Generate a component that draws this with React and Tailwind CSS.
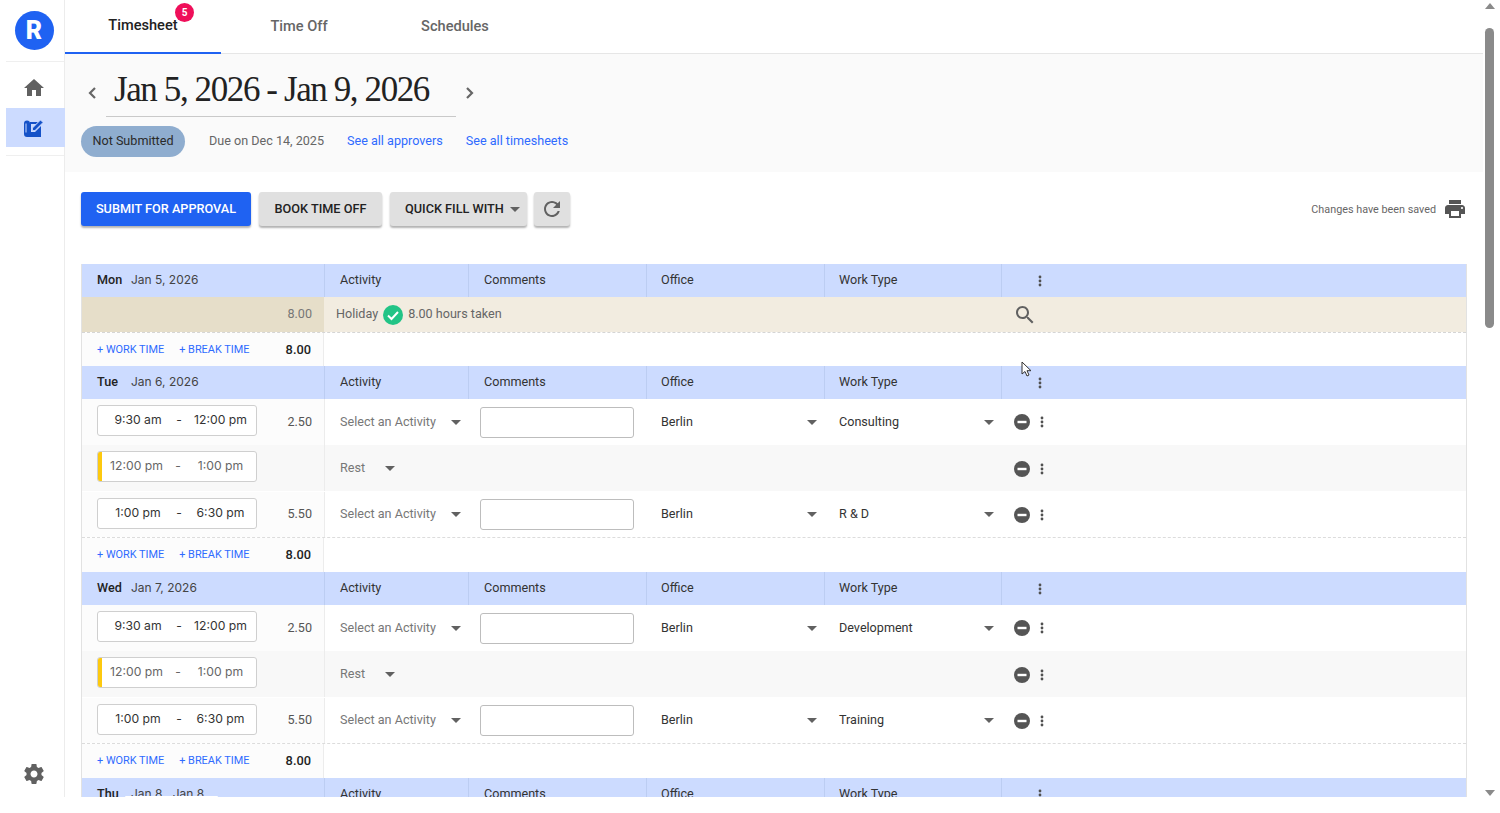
import React from 'react';

const BLUE = 'text-[#2f6bff]';
const COLS = 'grid grid-cols-[242px_144px_178px_178px_177px_1fr]';
const RAISED = 'shadow-[0_2px_2px_rgba(0,0,0,0.3)]';

function Caret({ className = '' }) {
  return (
    <svg width="10" height="5" viewBox="0 0 10 5" className={className}>
      <path d="M0 0h10L5 5z" fill="#616161" />
    </svg>
  );
}

function Dots({ className = '' }) {
  return (
    <svg width="4" height="12" viewBox="0 0 4 12" className={className}>
      <circle cx="2" cy="2" r="1.4" fill="#505050" />
      <circle cx="2" cy="6" r="1.4" fill="#505050" />
      <circle cx="2" cy="10" r="1.4" fill="#505050" />
    </svg>
  );
}

function MinusCircle() {
  return (
    <svg width="16" height="16" viewBox="0 0 16 16">
      <circle cx="8" cy="8" r="8" fill="#555" />
      <rect x="3.5" y="6.8" width="9" height="2.4" fill="#fff" />
    </svg>
  );
}

function Chevron({ left }) {
  return (
    <svg width="10" height="14" viewBox="0 0 10 14">
      <path d={left ? 'M8 2 3 7l5 5' : 'M2 2l5 5-5 5'} fill="none" stroke="#666" strokeWidth="2.2" />
    </svg>
  );
}

function HeaderRow({ day, date }) {
  const cell = 'flex items-center pb-px border-l border-[#bccdf2] text-[#333]';
  return (
    <div className={`${COLS} h-[33px] bg-[#ccdbff] text-[12.6px] overflow-hidden`}>
      <div className="flex items-center pb-px pl-[15px]">
        <span className="font-medium text-[#222] w-[34px]">{day}</span>
        <span className="text-[#444] font-['Inter',sans-serif] text-[12px]">{date}</span>
      </div>
      <div className={`${cell} pl-[15px]`}>Activity</div>
      <div className={`${cell} pl-[15px]`}>Comments</div>
      <div className={`${cell} pl-[14px]`}>Office</div>
      <div className={`${cell} pl-[14px]`}>Work Type</div>
      <div className="flex items-center border-l border-[#bccdf2] pl-[36px]">
        <Dots />
      </div>
    </div>
  );
}

function Times({ from, to, rest }) {
  return (
    <div className={`flex items-center h-[31px] w-[160px] bg-white border border-[#cfcfcf] rounded-[3px] overflow-hidden font-['Inter',sans-serif] text-[12.2px] whitespace-nowrap ${rest ? 'text-[#666]' : 'text-[#333]'}`}>
      {rest ? <div className="w-[4px] h-full shrink-0 bg-[#fdc90f]" /> : <div className="w-[6px] shrink-0" />}
      <span className={`${rest ? 'w-[69px]' : 'w-[68px]'} shrink-0 text-center`}>{from}</span>
      <span className="w-[14px] shrink-0 text-center">-</span>
      <span className={`${rest ? 'w-[71px]' : 'w-[69px]'} shrink-0 text-center`}>{to}</span>
    </div>
  );
}

function WorkRow({ from, to, hours, office, type, last }) {
  return (
    <div className={`${COLS} text-[12.6px] bg-white ${last ? 'h-[47px] pt-px border-b border-dashed border-[#dcdcdc]' : 'h-[46px]'}`}>
      <div className="flex items-center pl-[15px] pr-[12px] bg-[#fcfcfc]">
        <div className="-mt-[3px]"><Times from={from} to={to} /></div>
        <span className="ml-auto text-[#555]">{hours}</span>
      </div>
      <div className="flex items-center pl-[15px] border-l border-[#ececec] text-[#777]">
        <span className="w-[111px] shrink-0">Select an Activity</span>
        <Caret />
      </div>
      <div className="flex items-center pl-[12px]">
        <div className="w-[154px] h-[31px] bg-white border border-[#bdbdbd] rounded-[3px]" />
      </div>
      <div className="flex items-center pl-[15px] text-[#333]">
        <span className="w-[146px] shrink-0">{office}</span>
        <Caret />
      </div>
      <div className="flex items-center pl-[15px] text-[#333]">
        <span className="w-[145px] shrink-0">{type}</span>
        <Caret />
      </div>
      <div className="flex items-center pl-[13px] gap-[10px]">
        <MinusCircle />
        <Dots />
      </div>
    </div>
  );
}

function RestRow() {
  return (
    <div className={`${COLS} h-[46px] bg-[#f8f8f8] text-[12.6px]`}>
      <div className="flex items-center pl-[15px]">
        <div className="-mt-[3px]"><Times from="12:00 pm" to="1:00 pm" rest /></div>
      </div>
      <div className="flex items-center pl-[15px] pt-px border-l border-[#ececec] text-[#777]">
        <span className="w-[45px]">Rest</span>
        <Caret />
      </div>
      <div />
      <div />
      <div />
      <div className="flex items-center pl-[13px] pt-px gap-[10px]">
        <MinusCircle />
        <Dots />
      </div>
    </div>
  );
}

function FooterRow({ h = 'h-[34px]' }) {
  return (
    <div className={`grid grid-cols-[242px_1fr] ${h} bg-white`}>
      <div className="flex items-center pl-[15px] pr-[12px] bg-[#fcfcfc] border-r border-[#ececec]">
        <span className={`text-[10.9px] pt-px ${BLUE}`}>+ WORK TIME</span>
        <span className={`text-[10.9px] pt-px ml-[15px] ${BLUE}`}>+ BREAK TIME</span>
        <span className="ml-auto text-[12.8px] font-medium text-[#222]">8.00</span>
      </div>
      <div />
    </div>
  );
}

function Day({ day, date, rows }) {
  return (
    <div>
      <HeaderRow day={day} date={date} />
      <WorkRow from="9:30 am" to="12:00 pm" hours="2.50" office="Berlin" type={rows[0]} />
      <RestRow />
      <WorkRow from="1:00 pm" to="6:30 pm" hours="5.50" office="Berlin" type={rows[1]} last />
      <FooterRow />
    </div>
  );
}

export default function App() {
  return (
    <div className="relative h-[813px] w-full bg-white overflow-hidden font-['Roboto',sans-serif]">
      <div className="flex h-[797px] overflow-hidden">
        {/* sidebar */}
        <aside className="w-[65px] shrink-0 border-r border-[#ececec] flex flex-col">
          <div className="h-[61px] flex items-center justify-center pl-[4px]">
            <div className="w-[39px] h-[39px] rounded-full bg-[#1f62f2] flex items-center justify-center text-white text-[25px] font-black">R</div>
          </div>
          <div className="ml-[6px] border-t border-[#efefef] h-[47px] flex items-center justify-center pt-[6px] pr-[2px]">
            <svg width="24" height="24" viewBox="0 0 24 24"><path d="M10 20v-6h4v6h5v-8h3L12 3 2 12h3v8z" fill="#616161" /></svg>
          </div>
          <div className="ml-[6px] -mr-px h-[39px] bg-[#ccdbff] flex items-center justify-center pr-[3px]">
            <svg width="22" height="20" viewBox="0 0 22 20">
              <path d="M1 5.500a3 3 0 0 1 6 0V4h8l-2 2H8v8h4l6-6v11H4a3 3 0 0 1-3-3z" fill="#1552c8" />
              <path d="M3 5.500v9" stroke="#ccdbff" strokeWidth="1" />
              <path d="M9.500 12.500V10l8-8L20 4.500l-8 8z" fill="#1552c8" stroke="#ccdbff" strokeWidth="0.8" />
            </svg>
          </div>
          <div className="ml-[6px] border-t border-[#efefef] mt-[8px]" />
          <div className="mt-auto h-[35px] flex justify-center pl-[4px]">
            <svg width="24" height="24" viewBox="0 0 24 24"><path d="M19.430 12.980c.04-.32.07-.64.07-.98s-.03-.66-.07-.98l2.110-1.650c.19-.15.24-.42.12-.64l-2-3.460c-.12-.22-.39-.3-.61-.22l-2.490 1c-.52-.4-1.080-.73-1.690-.98l-.38-2.650C14.460 2.180 14.250 2 14 2h-4c-.25 0-.46.18-.49.42l-.38 2.650c-.61.25-1.170.59-1.690.98l-2.490-1c-.23-.09-.49 0-.61.22l-2 3.460c-.13.22-.07.49.12.64l2.110 1.650c-.04.32-.07.65-.07.98s.03.66.07.98l-2.110 1.650c-.19.15-.24.42-.12.64l2 3.460c.12.22.39.3.61.22l2.490-1c.52.4 1.080.73 1.690.98l.38 2.650c.03.24.24.42.49.42h4c.25 0 .46-.18.49-.42l.38-2.650c.61-.25 1.170-.59 1.690-.98l2.490 1c.23.09.49 0 .61-.22l2-3.460c.12-.22.07-.49-.12-.64zM12 15.500c-1.930 0-3.500-1.570-3.500-3.500s1.570-3.500 3.500-3.500 3.500 1.570 3.500 3.500-1.570 3.500-3.500 3.500z" fill="#616161" /></svg>
          </div>
        </aside>

        {/* main */}
        <main className="w-[1418px] shrink-0">
          <div className="flex h-[54px] border-b border-[#e6e6e6]">
            <div className="relative w-[156px] h-[54px] border-b-2 border-[#1f62f2] flex items-center justify-center text-[14.6px] font-medium text-[#222]">
              Timesheet
              <span className="absolute left-[110px] top-[3px] w-[19px] h-[19px] rounded-full bg-[#ef0f5a] text-white text-[10px] font-bold flex items-center justify-center">5</span>
            </div>
            <div className="w-[156px] flex items-center justify-center text-[14.6px] font-medium text-[#666]">Time Off</div>
            <div className="w-[156px] flex items-center justify-center text-[14.6px] font-medium text-[#666]">Schedules</div>
          </div>

          <div className="h-[118px] bg-[#fafafa] pl-[16px]">
            <div className="flex items-start h-[72px]">
              <div className="pl-[6px] pt-[32px] w-[25px]"><Chevron left /></div>
              <div className="w-[350px] h-[63px] border-b border-[#c9c9c9] pl-[8px] pt-[14px] font-['Liberation_Serif',serif] text-[35px] leading-[44px] text-[#222] tracking-[-1.4px] whitespace-nowrap">
                Jan 5, 2026 - Jan 9, 2026
              </div>
              <div className="pl-[9px] pt-[32px]"><Chevron /></div>
            </div>
            <div className="flex items-center text-[12.6px]">
              <span className="w-[104px] h-[31px] rounded-full bg-[#8fadcf] text-[#2a2a2a] flex items-center justify-center">Not Submitted</span>
              <span className="ml-[24px] text-[#666]">Due on Dec 14, 2025</span>
              <span className={`ml-[23px] ${BLUE}`}>See all approvers</span>
              <span className={`ml-[23px] ${BLUE}`}>See all timesheets</span>
            </div>
          </div>

          <div className="h-[92px] pl-[16px] pr-[16px] flex items-start pt-[20px]">
            <button className={`w-[170px] h-[34px] bg-[#1f62f2] text-white text-[12.7px] font-medium rounded-[3px] ${RAISED}`}>SUBMIT FOR APPROVAL</button>
            <button className={`ml-[8px] w-[123px] h-[34px] bg-[#e0e0e0] text-[#222] text-[12.7px] font-medium rounded-[3px] ${RAISED}`}>BOOK TIME OFF</button>
            <button className={`ml-[8px] w-[137px] h-[34px] bg-[#e0e0e0] text-[#222] text-[12.7px] font-medium rounded-[3px] ${RAISED} flex items-center pl-[15px] whitespace-nowrap`}>
              QUICK FILL WITH
              <Caret className="ml-[6px]" />
            </button>
            <button className={`ml-[7px] w-[36px] h-[34px] bg-[#e0e0e0] rounded-[3px] ${RAISED} flex items-center justify-center`}>
              <svg width="24" height="24" viewBox="0 0 24 24"><path d="M17.650 6.350C16.200 4.900 14.210 4 12 4c-4.420 0-7.990 3.580-7.990 8s3.570 8 7.990 8c3.730 0 6.840-2.550 7.730-6h-2.080c-.82 2.330-3.040 4-5.650 4-3.310 0-6-2.690-6-6s2.690-6 6-6c1.660 0 3.140.69 4.220 1.780L13 11h7V4z" fill="#616161" /></svg>
            </button>
            <span className="ml-auto mt-[10px] text-[10.8px] text-[#666]">Changes have been saved</span>
            <svg className="ml-[7px] mt-[5px]" width="24" height="24" viewBox="0 0 24 24"><path d="M19 8H5c-1.660 0-3 1.340-3 3v6h4v4h12v-4h4v-6c0-1.660-1.340-3-3-3zm-3 11H8v-5h8zm3-7c-.55 0-1-.45-1-1s.45-1 1-1 1 .45 1 1-.45 1-1 1zm-1-9H6v4h12z" fill="#555" /></svg>
          </div>

          <div className="ml-[16px] w-[1386px] border-x border-[#e2e2e2]">
            <HeaderRow day="Mon" date="Jan 5, 2026" />
            <div className="grid grid-cols-[242px_1fr] h-[36px] border-b border-dashed border-[#d5d5d5] text-[12.6px]">
              <div className="bg-[#e6dec9] flex items-center justify-end pr-[12px] text-[#777]">8.00</div>
              <div className="bg-[#f2ece0] flex items-center pl-[12px] text-[#666] relative">
                <span>Holiday</span>
                <svg className="ml-[5px]" width="20" height="20" viewBox="0 0 20 20">
                  <circle cx="10" cy="10" r="10" fill="#22c486" />
                  <path d="M5 10.500 8.500 14 15 7" fill="none" stroke="#fff" strokeWidth="2" />
                </svg>
                <span className="ml-[5px]">8.00 hours taken</span>
                <svg className="absolute left-[689px] top-[6px]" width="24" height="24" viewBox="0 0 24 24"><path d="M15.500 14h-.79l-.28-.27C15.410 12.590 16 11.110 16 9.500 16 5.910 13.090 3 9.500 3S3 5.910 3 9.500 5.910 16 9.500 16c1.610 0 3.090-.59 4.230-1.570l.27.28v.79l5 4.990L20.490 19zm-6 0C7.010 14 5 11.990 5 9.500S7.010 5 9.500 5 14 7.010 14 9.500 11.990 14 9.500 14z" fill="#616161" /></svg>
              </div>
            </div>
            <FooterRow h="h-[33px]" />
            <Day day="Tue" date="Jan 6, 2026" rows={['Consulting', 'R & D']} />
            <Day day="Wed" date="Jan 7, 2026" rows={['Development', 'Training']} />
            <HeaderRow day="Thu" date="Jan 8 . Jan 8 ." />
          </div>
        </main>

        {/* scrollbar */}
        <div className="w-[17px] shrink-0 relative">
          <svg className="absolute left-[2px] top-[3px]" width="10" height="6" viewBox="0 0 10 6"><path d="M5 0l5 6H0z" fill="#8a8a8a" /></svg>
          <div className="absolute left-[2px] top-[28px] w-[9px] h-[300px] rounded-full bg-[#8a8a8a]" />
          <svg className="absolute left-[2px] top-[790px]" width="10" height="6" viewBox="0 0 10 6"><path d="M0 0h10L5 6z" fill="#8a8a8a" /></svg>
        </div>
      </div>

      {/* white smudge over the Thu date, in the capture */}
      <div className="absolute left-[125px] top-[796px] w-[93px] h-px bg-white rounded-t" />

      {/* mouse pointer from the capture */}
      <svg className="absolute left-[1021px] top-[361px]" width="12" height="17" viewBox="0 0 12 17">
        <path d="M1 1v12l3-2.500 2 4.500 2-1-2-4.300h4z" fill="#fff" stroke="#333" strokeWidth="1" />
      </svg>
    </div>
  );
}
